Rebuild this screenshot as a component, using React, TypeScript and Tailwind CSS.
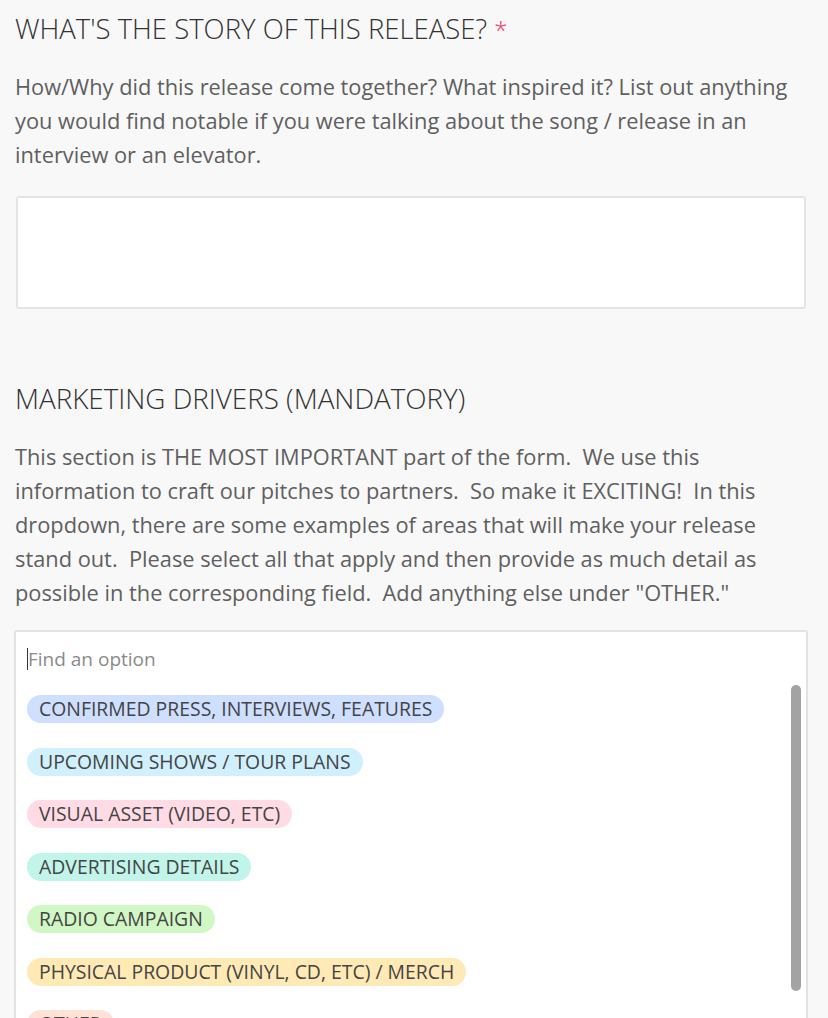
const CHIPS = [
  { label: "CONFIRMED PRESS, INTERVIEWS, FEATURES", bg: "bg-[#cfdfff]" },
  { label: "UPCOMING SHOWS / TOUR PLANS", bg: "bg-[#d0f0fd]" },
  { label: "VISUAL ASSET (VIDEO, ETC)", bg: "bg-[#ffdce5]" },
  { label: "ADVERTISING DETAILS", bg: "bg-[#c2f5e9]" },
  { label: "RADIO CAMPAIGN", bg: "bg-[#d1f7c4]" },
  { label: "PHYSICAL PRODUCT (VINYL, CD, ETC) / MERCH", bg: "bg-[#ffeab6]" },
  { label: "OTHER", bg: "bg-[#fee2d5]" },
];

const STORY_TEXT =
  "How/Why did this release come together? What inspired it? List out anything\nyou would find notable if you were talking about the song / release in an\ninterview or an elevator.";

const DRIVERS_TEXT =
  "This section is THE MOST IMPORTANT part of the form.  We use this\ninformation to craft our pitches to partners.  So make it EXCITING!  In this\ndropdown, there are some examples of areas that will make your release\nstand out.  Please select all that apply and then provide as much detail as\npossible in the corresponding field.  Add anything else under \"OTHER.\"";

export default function App() {
  return (
    <div className="min-h-screen overflow-hidden bg-[#f8f8f8] pl-[14px] font-['Open_Sans',sans-serif]">
      <div className="pt-[13px] pl-[1px]">
        <h2 className="text-[27.5px] leading-[32px] font-light text-[#333] whitespace-nowrap">
          WHAT'S THE STORY OF THIS RELEASE? <span className="text-[#ef3061] text-[24px]">*</span>
        </h2>
        <p className="mt-[24px] text-[21.8px] leading-[34px] text-[#5f5f5f] whitespace-pre">
          {STORY_TEXT}
        </p>
      </div>

      <div className="mt-[24px] ml-[2px] h-[113px] w-[790px] rounded-[3px] border-2 border-[#e4e4e4] bg-white" />

      <div className="mt-[73px] pl-[1px]">
        <h2 className="text-[27.8px] leading-[32px] font-light text-[#333] whitespace-nowrap">
          MARKETING DRIVERS (MANDATORY)
        </h2>
        <p className="mt-[26px] text-[21.8px] leading-[34px] text-[#5f5f5f] whitespace-pre">
          {DRIVERS_TEXT}
        </p>
      </div>

      <div className="relative mt-[20px] h-[420px] w-[794px] rounded-[3px] border-2 border-[#e2e2e2] bg-white pl-[11px] pt-[15px]">
        <div className="flex items-center h-[24px]">
          <span className="h-[22px] w-px bg-[#333]" />
          <span className="text-[19px] text-[#8a8a8a]">Find an option</span>
        </div>
        <div className="mt-[24px] flex flex-col items-start gap-[24.5px]">
          {CHIPS.map((c) => (
            <span
              key={c.label}
              className={`${c.bg} h-[28px] rounded-full px-[12px] text-[19.4px] leading-[28px] text-[#444] whitespace-nowrap`}
            >
              {c.label}
            </span>
          ))}
        </div>
        <div className="absolute right-[5px] top-[53px] h-[306px] w-[10px] rounded-full bg-[#a3a3a3]" />
      </div>
    </div>
  );
}
